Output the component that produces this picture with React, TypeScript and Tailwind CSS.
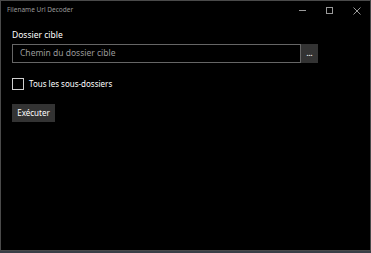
import React from "react";

export default function App() {
  const font = { fontFamily: '"Noto Sans", "Open Sans", sans-serif' };
  return (
    <div className="w-[371px] h-[253px] bg-[#3a3f47] flex flex-col" style={font}>
      <div className="w-[371px] h-[251px] bg-black border border-[#4a4a4a] flex flex-col">
        {/* title bar */}
        <div className="h-[19px] flex items-center justify-between pl-[6px]">
          <span className="text-[6.5px] text-[#9a9a9a] leading-none">Filename Url Decoder</span>
          <div className="flex items-center h-full text-[#9a9a9a]">
            <div className="w-[27px] h-full flex items-center justify-center">
              <div className="w-[7px] h-px bg-[#9a9a9a]" />
            </div>
            <div className="w-[27px] h-full flex items-center justify-center">
              <div className="w-[7px] h-[7px] border border-[#9a9a9a]" />
            </div>
            <div className="w-[27px] h-full flex items-center justify-center">
              <svg width="8" height="8" viewBox="0 0 8 8" stroke="#9a9a9a" strokeWidth="1">
                <path d="M0.5 0.5 L7.5 7.5 M7.5 0.5 L0.5 7.5" />
              </svg>
            </div>
          </div>
        </div>
        {/* content */}
        <div className="flex flex-col pl-[11px] pt-[11px]">
          <span className="text-[8.5px] text-white leading-none mb-[4px]">Dossier cible</span>
          <div className="flex">
            <div className="w-[289px] h-[19px] border border-[#666] flex items-center pl-[7px]">
              <span className="text-[8.5px] text-[#9a9a9a] leading-none">Chemin du dossier cible</span>
            </div>
            <div className="w-[17px] h-[19px] bg-[#333] flex items-center justify-center">
              <span className="text-[7px] text-white leading-none font-bold">...</span>
            </div>
          </div>
          <div className="flex items-center mt-[15px]">
            <div className="w-[12px] h-[12px] border border-[#cfcfcf]" />
            <span className="text-[8px] text-white leading-none ml-[5px]">Tous les sous-dossiers</span>
          </div>
          <div className="mt-[14px]">
            <div className="w-[43px] h-[18px] bg-[#333] flex items-center justify-center">
              <span className="text-[8px] text-white leading-none">Exécuter</span>
            </div>
          </div>
        </div>
      </div>
    </div>
  );
}
